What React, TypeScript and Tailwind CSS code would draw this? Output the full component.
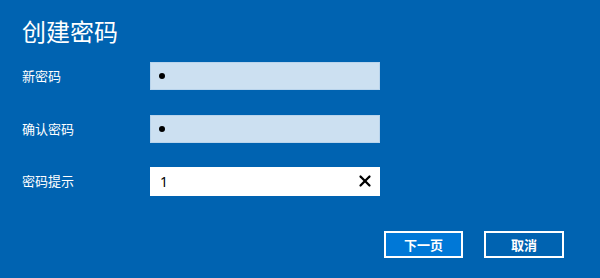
import { X } from "lucide-react"

const font = { fontFamily: '"Noto Sans CJK SC", "Noto Sans", sans-serif' }

function Row({ label, children }: { label: string; children: React.ReactNode }) {
  return (
    <div className="flex items-center h-[28px]">
      <div className="w-[128px] text-[13px] text-white">{label}</div>
      {children}
    </div>
  )
}

export default function App() {
  return (
    <div
      className="w-[600px] h-[278px] bg-[#0063b1] pl-[22px] pt-[14px] relative overflow-hidden"
      style={font}
    >
      <h1 className="text-[24px] leading-[34px] text-white font-normal">创建密码</h1>

      <div className="mt-[14px] flex flex-col gap-[25px]">
        <Row label="新密码">
          <div className="w-[230px] h-[28px] bg-[#cce0f1] border border-[#b9d4ec] flex items-center pl-[8px]">
            <span className="w-[6px] h-[6px] rounded-full bg-black" />
          </div>
        </Row>
        <Row label="确认密码">
          <div className="w-[230px] h-[28px] bg-[#cce0f1] border border-[#b9d4ec] flex items-center pl-[8px]">
            <span className="w-[6px] h-[6px] rounded-full bg-black" />
          </div>
        </Row>
        <div className="mt-[-1px]">
          <Row label="密码提示">
            <div className="w-[230px] h-[29px] bg-white flex items-center pl-[10px] pr-[6px] justify-between">
              <span className="text-[14px] text-black" style={{ fontFamily: '"Noto Sans", sans-serif' }}>1</span>
              <X size={18} strokeWidth={3} className="text-black" />
            </div>
          </Row>
        </div>
      </div>

      <div className="flex justify-end gap-[21px] pr-[36px] mt-[36px]">
        <button className="w-[79px] h-[27px] bg-[#0078d7] border-2 border-white text-white text-[13px] font-bold">
          下一页
        </button>
        <button className="w-[80px] h-[27px] bg-[#0063b1] border-2 border-white text-white text-[13px] font-bold">
          取消
        </button>
      </div>
    </div>
  )
}
